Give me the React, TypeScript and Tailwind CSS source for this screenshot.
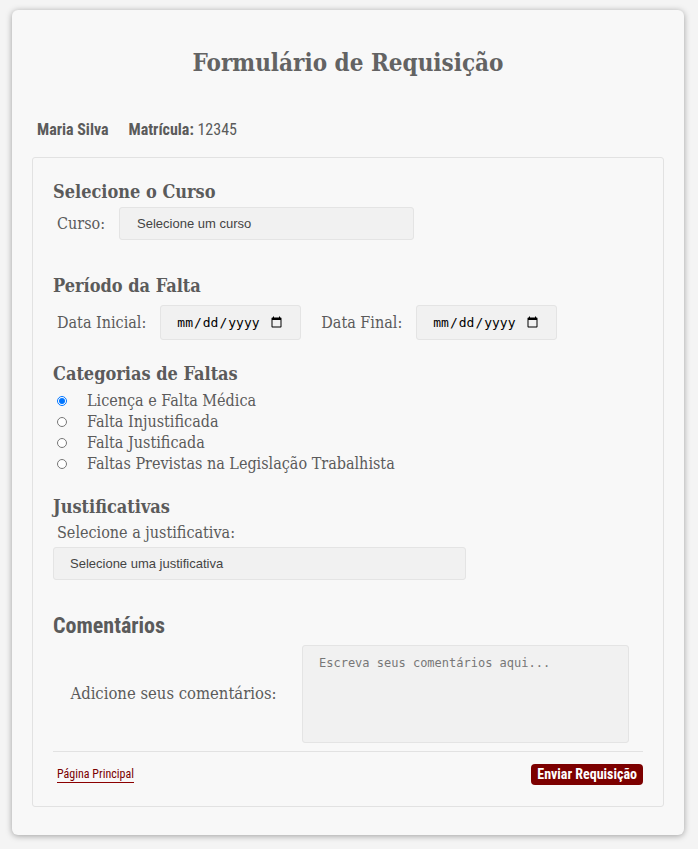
import React from "react";

const slab = "font-['DejaVu_Serif_Condensed','DejaVu_Serif',serif]";
const cond = "font-['Roboto_Condensed',Roboto,sans-serif]";

const categorias = [
  "Licença e Falta Médica",
  "Falta Injustificada",
  "Falta Justificada",
  "Faltas Previstas na Legislação Trabalhista",
];

export default function App() {
  return (
    <div className="min-h-screen bg-[#f4f4f4] pt-[10px] pb-[14px] pl-[12px] pr-[14px]">
      <div className="rounded-[6px] bg-[#f8f8f8] shadow-[0_1px_6px_rgba(0,0,0,0.35)] px-[20px] pt-[36px] pb-[28px]">
        <h1 className={`${slab} text-center text-[24px] font-bold text-[#636363] leading-[34px]`}>
          Formulário de Requisição
        </h1>

        <div className={`${cond} mt-[40px] flex gap-[20px] px-[5px] text-[16px] leading-[20px] text-[#5b5b5b]`}>
          <span className="font-bold">Maria Silva</span>
          <span>
            <b>Matrícula:</b> 12345
          </span>
        </div>

        <div className="mt-[17px] rounded-[3px] border border-[#e2e2e2] bg-[#f8f8f8] px-[20px] pt-[21px] pb-[21px]">
          <h2 className={`${slab} text-[18px] font-bold text-[#5b5b5b] leading-[26px]`}>Selecione o Curso</h2>
          <div className="mt-[2px] flex items-center gap-[14px] pl-[4px]">
            <label className={`${slab} text-[16px] text-[#5b5b5b]`}>Curso:</label>
            <div className="flex h-[33px] w-[295px] items-center rounded-[3px] border border-[#e4e4e4] bg-[#f1f1f1] px-[17px] font-['Liberation_Sans',Arial,sans-serif] text-[13px] text-[#444]">
              Selecione um curso
            </div>
          </div>

          <h2 className={`${slab} mt-[33px] text-[18px] font-bold text-[#5b5b5b] leading-[26px]`}>Período da Falta</h2>
          <div className="mt-[6px] flex items-center pl-[4px]">
            <label className={`${slab} text-[16px] text-[#5b5b5b]`}>Data Inicial:</label>
            <input
              type="date"
              className="ml-[14px] h-[35px] w-[141px] rounded-[3px] border border-[#e4e4e4] bg-[#f1f1f1] px-[15px] font-['DejaVu_Sans_Mono',monospace] text-[13px] text-black"
            />
            <label className={`${slab} ml-[20px] text-[16px] text-[#5b5b5b]`}>Data Final:</label>
            <input
              type="date"
              className="ml-[14px] h-[35px] w-[141px] rounded-[3px] border border-[#e4e4e4] bg-[#f1f1f1] px-[15px] font-['DejaVu_Sans_Mono',monospace] text-[13px] text-black"
            />
          </div>

          <h2 className={`${slab} mt-[21px] text-[18px] font-bold text-[#5b5b5b] leading-[26px]`}>Categorias de Faltas</h2>
          <div className="mt-[3px] flex flex-col">
            {categorias.map((c, i) => (
              <label key={c} className={`${slab} flex h-[21px] items-center text-[16px] text-[#5b5b5b]`}>
                <input type="radio" name="cat" defaultChecked={i === 0} className="m-0 ml-[4px] h-[10px] w-[10px]" />
                <span className="ml-[20px]">{c}</span>
              </label>
            ))}
          </div>

          <h2 className={`${slab} mt-[20px] text-[18px] font-bold text-[#5b5b5b] leading-[26px]`}>Justificativas</h2>
          <label className={`${slab} mt-[1px] block pl-[4px] text-[16px] text-[#5b5b5b] leading-[24px]`}>
            Selecione a justificativa:
          </label>
          <div className="mt-[2px] flex h-[33px] w-[413px] items-center rounded-[3px] border border-[#e4e4e4] bg-[#f1f1f1] px-[16px] font-['Liberation_Sans',Arial,sans-serif] text-[13px] text-[#444]">
            Selecione uma justificativa
          </div>

          <h2 className={`${cond} mt-[32px] text-[22px] font-bold text-[#5b5b5b] leading-[28px]`}>Comentários</h2>
          <div className="mt-[5px] flex items-center">
            <label className={`${slab} w-[241px] text-center text-[16.5px] text-[#5b5b5b]`}>
              Adicione seus comentários:
            </label>
            <textarea
              placeholder="Escreva seus comentários aqui..."
              className="ml-[8px] h-[98px] w-[327px] resize-none rounded-[3px] border border-[#e4e4e4] bg-[#f1f1f1] px-[16px] py-[8px] font-['DejaVu_Sans_Mono',monospace] text-[12px] placeholder:text-[#777]"
            />
          </div>

          <div className="mt-[8px] flex items-center justify-between border-t border-[#e2e2e2] pt-[12px]">
            <a href="#" className={`${cond} ml-[4px] border-b border-[#8b0000] text-[12px] leading-[15px] text-[#7a0000]`}>
              Página Principal
            </a>
            <button className={`${cond} rounded-[4px] bg-[#7c0000] px-[6px] py-[2px] text-[14px] font-bold leading-[17px] text-white`}>
              Enviar Requisição
            </button>
          </div>
        </div>
      </div>
    </div>
  );
}
